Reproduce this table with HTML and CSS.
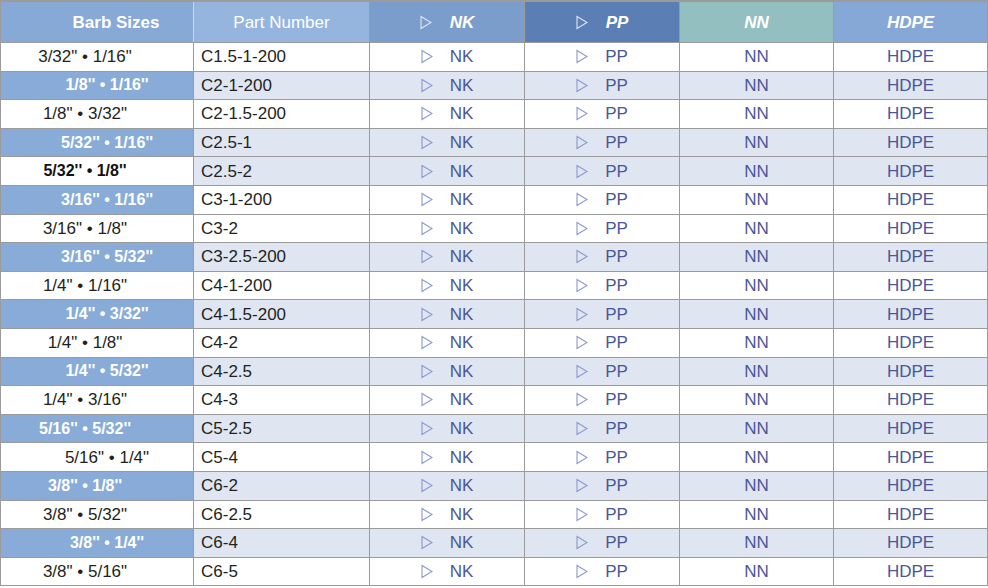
FILE: index.html
```html
<!DOCTYPE html>
<html>
<head>
<meta charset="utf-8">
<link rel="stylesheet" href="styles.css">
</head>
<body>
<div class="sheet">
  <div class="row head">
    <div class="cell h-barb">Barb Sizes</div>
    <div class="cell h-part">Part Number</div>
    <div class="cell h-nk"><span class="mat"><svg class="tri" viewBox="0 0 12 15"><polygon points="1,1.5 11,7.5 1,13.5"/></svg><b>NK</b></span></div>
    <div class="cell h-pp"><span class="mat"><svg class="tri" viewBox="0 0 12 15"><polygon points="1,1.5 11,7.5 1,13.5"/></svg><b>PP</b></span></div>
    <div class="cell h-nn"><b>NN</b></div>
    <div class="cell h-hdpe"><b>HDPE</b></div>
  </div>

  <div class="row">
    <div class="cell barb at-l">3/32" • 1/16"</div><div class="cell part">C1.5-1-200</div>
    <div class="cell m"><span class="mat"><svg class="tri" viewBox="0 0 12 15"><polygon points="1,1.5 11,7.5 1,13.5"/></svg>NK</span></div>
    <div class="cell m"><span class="mat"><svg class="tri" viewBox="0 0 12 15"><polygon points="1,1.5 11,7.5 1,13.5"/></svg>PP</span></div>
    <div class="cell m">NN</div><div class="cell m">HDPE</div>
  </div>
  <div class="row shade">
    <div class="cell barb hi at-r">1/8'' • 1/16''</div><div class="cell part">C2-1-200</div>
    <div class="cell m"><span class="mat"><svg class="tri" viewBox="0 0 12 15"><polygon points="1,1.5 11,7.5 1,13.5"/></svg>NK</span></div>
    <div class="cell m"><span class="mat"><svg class="tri" viewBox="0 0 12 15"><polygon points="1,1.5 11,7.5 1,13.5"/></svg>PP</span></div>
    <div class="cell m">NN</div><div class="cell m">HDPE</div>
  </div>
  <div class="row">
    <div class="cell barb at-l">1/8" • 3/32"</div><div class="cell part">C2-1.5-200</div>
    <div class="cell m"><span class="mat"><svg class="tri" viewBox="0 0 12 15"><polygon points="1,1.5 11,7.5 1,13.5"/></svg>NK</span></div>
    <div class="cell m"><span class="mat"><svg class="tri" viewBox="0 0 12 15"><polygon points="1,1.5 11,7.5 1,13.5"/></svg>PP</span></div>
    <div class="cell m">NN</div><div class="cell m">HDPE</div>
  </div>
  <div class="row shade">
    <div class="cell barb hi at-r">5/32'' • 1/16''</div><div class="cell part">C2.5-1</div>
    <div class="cell m"><span class="mat"><svg class="tri" viewBox="0 0 12 15"><polygon points="1,1.5 11,7.5 1,13.5"/></svg>NK</span></div>
    <div class="cell m"><span class="mat"><svg class="tri" viewBox="0 0 12 15"><polygon points="1,1.5 11,7.5 1,13.5"/></svg>PP</span></div>
    <div class="cell m">NN</div><div class="cell m">HDPE</div>
  </div>
  <div class="row shade">
    <div class="cell barb strong at-l">5/32'' • 1/8''</div><div class="cell part">C2.5-2</div>
    <div class="cell m"><span class="mat"><svg class="tri" viewBox="0 0 12 15"><polygon points="1,1.5 11,7.5 1,13.5"/></svg>NK</span></div>
    <div class="cell m"><span class="mat"><svg class="tri" viewBox="0 0 12 15"><polygon points="1,1.5 11,7.5 1,13.5"/></svg>PP</span></div>
    <div class="cell m">NN</div><div class="cell m">HDPE</div>
  </div>
  <div class="row">
    <div class="cell barb hi at-r">3/16'' • 1/16''</div><div class="cell part">C3-1-200</div>
    <div class="cell m"><span class="mat"><svg class="tri" viewBox="0 0 12 15"><polygon points="1,1.5 11,7.5 1,13.5"/></svg>NK</span></div>
    <div class="cell m"><span class="mat"><svg class="tri" viewBox="0 0 12 15"><polygon points="1,1.5 11,7.5 1,13.5"/></svg>PP</span></div>
    <div class="cell m">NN</div><div class="cell m">HDPE</div>
  </div>
  <div class="row">
    <div class="cell barb at-l">3/16" • 1/8"</div><div class="cell part">C3-2</div>
    <div class="cell m"><span class="mat"><svg class="tri" viewBox="0 0 12 15"><polygon points="1,1.5 11,7.5 1,13.5"/></svg>NK</span></div>
    <div class="cell m"><span class="mat"><svg class="tri" viewBox="0 0 12 15"><polygon points="1,1.5 11,7.5 1,13.5"/></svg>PP</span></div>
    <div class="cell m">NN</div><div class="cell m">HDPE</div>
  </div>
  <div class="row shade">
    <div class="cell barb hi at-r">3/16'' • 5/32''</div><div class="cell part">C3-2.5-200</div>
    <div class="cell m"><span class="mat"><svg class="tri" viewBox="0 0 12 15"><polygon points="1,1.5 11,7.5 1,13.5"/></svg>NK</span></div>
    <div class="cell m"><span class="mat"><svg class="tri" viewBox="0 0 12 15"><polygon points="1,1.5 11,7.5 1,13.5"/></svg>PP</span></div>
    <div class="cell m">NN</div><div class="cell m">HDPE</div>
  </div>
  <div class="row">
    <div class="cell barb at-l">1/4" • 1/16"</div><div class="cell part">C4-1-200</div>
    <div class="cell m"><span class="mat"><svg class="tri" viewBox="0 0 12 15"><polygon points="1,1.5 11,7.5 1,13.5"/></svg>NK</span></div>
    <div class="cell m"><span class="mat"><svg class="tri" viewBox="0 0 12 15"><polygon points="1,1.5 11,7.5 1,13.5"/></svg>PP</span></div>
    <div class="cell m">NN</div><div class="cell m">HDPE</div>
  </div>
  <div class="row shade">
    <div class="cell barb hi at-r">1/4'' • 3/32''</div><div class="cell part">C4-1.5-200</div>
    <div class="cell m"><span class="mat"><svg class="tri" viewBox="0 0 12 15"><polygon points="1,1.5 11,7.5 1,13.5"/></svg>NK</span></div>
    <div class="cell m"><span class="mat"><svg class="tri" viewBox="0 0 12 15"><polygon points="1,1.5 11,7.5 1,13.5"/></svg>PP</span></div>
    <div class="cell m">NN</div><div class="cell m">HDPE</div>
  </div>
  <div class="row">
    <div class="cell barb at-l">1/4" • 1/8"</div><div class="cell part">C4-2</div>
    <div class="cell m"><span class="mat"><svg class="tri" viewBox="0 0 12 15"><polygon points="1,1.5 11,7.5 1,13.5"/></svg>NK</span></div>
    <div class="cell m"><span class="mat"><svg class="tri" viewBox="0 0 12 15"><polygon points="1,1.5 11,7.5 1,13.5"/></svg>PP</span></div>
    <div class="cell m">NN</div><div class="cell m">HDPE</div>
  </div>
  <div class="row shade">
    <div class="cell barb hi at-r">1/4'' • 5/32''</div><div class="cell part">C4-2.5</div>
    <div class="cell m"><span class="mat"><svg class="tri" viewBox="0 0 12 15"><polygon points="1,1.5 11,7.5 1,13.5"/></svg>NK</span></div>
    <div class="cell m"><span class="mat"><svg class="tri" viewBox="0 0 12 15"><polygon points="1,1.5 11,7.5 1,13.5"/></svg>PP</span></div>
    <div class="cell m">NN</div><div class="cell m">HDPE</div>
  </div>
  <div class="row">
    <div class="cell barb at-l">1/4" • 3/16"</div><div class="cell part">C4-3</div>
    <div class="cell m"><span class="mat"><svg class="tri" viewBox="0 0 12 15"><polygon points="1,1.5 11,7.5 1,13.5"/></svg>NK</span></div>
    <div class="cell m"><span class="mat"><svg class="tri" viewBox="0 0 12 15"><polygon points="1,1.5 11,7.5 1,13.5"/></svg>PP</span></div>
    <div class="cell m">NN</div><div class="cell m">HDPE</div>
  </div>
  <div class="row shade">
    <div class="cell barb hi at-l">5/16'' • 5/32''</div><div class="cell part">C5-2.5</div>
    <div class="cell m"><span class="mat"><svg class="tri" viewBox="0 0 12 15"><polygon points="1,1.5 11,7.5 1,13.5"/></svg>NK</span></div>
    <div class="cell m"><span class="mat"><svg class="tri" viewBox="0 0 12 15"><polygon points="1,1.5 11,7.5 1,13.5"/></svg>PP</span></div>
    <div class="cell m">NN</div><div class="cell m">HDPE</div>
  </div>
  <div class="row">
    <div class="cell barb at-r">5/16" • 1/4"</div><div class="cell part">C5-4</div>
    <div class="cell m"><span class="mat"><svg class="tri" viewBox="0 0 12 15"><polygon points="1,1.5 11,7.5 1,13.5"/></svg>NK</span></div>
    <div class="cell m"><span class="mat"><svg class="tri" viewBox="0 0 12 15"><polygon points="1,1.5 11,7.5 1,13.5"/></svg>PP</span></div>
    <div class="cell m">NN</div><div class="cell m">HDPE</div>
  </div>
  <div class="row shade">
    <div class="cell barb hi at-l">3/8'' • 1/8''</div><div class="cell part">C6-2</div>
    <div class="cell m"><span class="mat"><svg class="tri" viewBox="0 0 12 15"><polygon points="1,1.5 11,7.5 1,13.5"/></svg>NK</span></div>
    <div class="cell m"><span class="mat"><svg class="tri" viewBox="0 0 12 15"><polygon points="1,1.5 11,7.5 1,13.5"/></svg>PP</span></div>
    <div class="cell m">NN</div><div class="cell m">HDPE</div>
  </div>
  <div class="row">
    <div class="cell barb at-l">3/8" • 5/32"</div><div class="cell part">C6-2.5</div>
    <div class="cell m"><span class="mat"><svg class="tri" viewBox="0 0 12 15"><polygon points="1,1.5 11,7.5 1,13.5"/></svg>NK</span></div>
    <div class="cell m"><span class="mat"><svg class="tri" viewBox="0 0 12 15"><polygon points="1,1.5 11,7.5 1,13.5"/></svg>PP</span></div>
    <div class="cell m">NN</div><div class="cell m">HDPE</div>
  </div>
  <div class="row shade">
    <div class="cell barb hi at-r">3/8'' • 1/4''</div><div class="cell part">C6-4</div>
    <div class="cell m"><span class="mat"><svg class="tri" viewBox="0 0 12 15"><polygon points="1,1.5 11,7.5 1,13.5"/></svg>NK</span></div>
    <div class="cell m"><span class="mat"><svg class="tri" viewBox="0 0 12 15"><polygon points="1,1.5 11,7.5 1,13.5"/></svg>PP</span></div>
    <div class="cell m">NN</div><div class="cell m">HDPE</div>
  </div>
  <div class="row">
    <div class="cell barb at-l">3/8" • 5/16"</div><div class="cell part">C6-5</div>
    <div class="cell m"><span class="mat"><svg class="tri" viewBox="0 0 12 15"><polygon points="1,1.5 11,7.5 1,13.5"/></svg>NK</span></div>
    <div class="cell m"><span class="mat"><svg class="tri" viewBox="0 0 12 15"><polygon points="1,1.5 11,7.5 1,13.5"/></svg>PP</span></div>
    <div class="cell m">NN</div><div class="cell m">HDPE</div>
  </div>
</div>
</body>
</html>
```

FILE: styles.css
```css
html, body {
  margin: 0;
  padding: 0;
  background: #ffffff;
}

body {
  font-family: "Liberation Sans", Arial, sans-serif;
  font-size: 17px;
  color: #231f20;
}

.sheet {
  width: 988px;
  box-sizing: border-box;
  border-top: 2px solid #9b9b9b;
  border-left: 1px solid #9b9b9b;
  display: flex;
  flex-direction: column;
}

.row {
  display: grid;
  grid-template-columns: 193px 176px 155px 155px 154px 154px;
  height: 28.6px;
  box-sizing: border-box;
  border-bottom: 1px solid #9b9b9b;
}

.row.head {
  height: 41px;
}

.cell {
  box-sizing: border-box;
  border-right: 1px solid #9b9b9b;
  display: flex;
  align-items: center;
  justify-content: center;
  white-space: nowrap;
  line-height: 1;
}

/* header */
.head .cell {
  color: #ffffff;
}

.h-barb {
  background: #86a9d6;
  font-weight: bold;
  padding-left: 38px;
  border-right-color: #c9d8ec;
}

.h-part {
  background: #96b5de;
}

.h-nk {
  background: #7b9dcc;
}

.h-pp {
  background: #5b7fb5;
}

.h-nn {
  background: #93bfc0;
}

.h-hdpe {
  background: #86a8d6;
}

.head b {
  font-weight: bold;
  font-style: italic;
}

.head .mat {
  gap: 18px;
}

.head .tri polygon {
  stroke: #dfe6f5;
}

/* shaded rows */
.row.shade .cell {
  background: #dfe6f2;
}

/* barb size column */
.barb {
  background: #ffffff;
}

.row.shade .barb {
  background: #ffffff;
}

.barb.at-l {
  padding-right: 24px;
}

.barb.at-r {
  padding-left: 20px;
}

.barb.hi,
.row.shade .barb.hi {
  background: #88acd7;
  color: #ffffff;
  font-weight: bold;
  font-size: 16px;
}

.barb.strong {
  font-weight: bold;
  font-size: 16px;
  color: #111111;
}

/* part number */
.part {
  justify-content: flex-start;
  padding-left: 7px;
}

/* material columns */
.m {
  color: #4a5797;
}

.mat {
  display: flex;
  align-items: center;
  gap: 17px;
}

.tri {
  width: 12px;
  height: 15px;
  display: block;
}

.tri polygon {
  fill: none;
  stroke: #8a97d0;
  stroke-width: 1.1;
  stroke-linejoin: miter;
}
```
